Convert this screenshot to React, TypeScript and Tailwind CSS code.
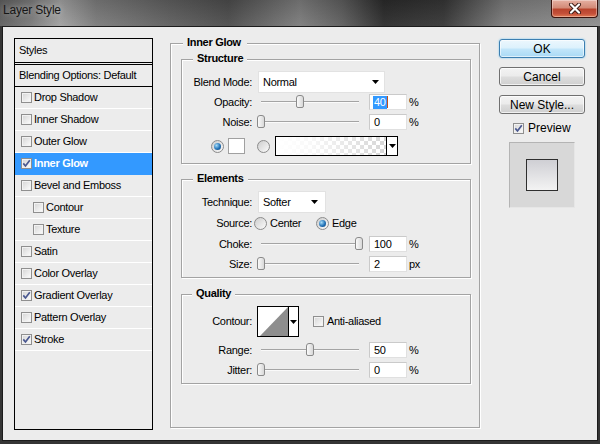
import React from 'react';

// Photoshop "Layer Style" dialog — Inner Glow page

const styles: { label: string; on?: boolean; sub?: boolean; active?: boolean }[] = [
  { label: 'Drop Shadow' },
  { label: 'Inner Shadow' },
  { label: 'Outer Glow' },
  { label: 'Inner Glow', on: true, active: true },
  { label: 'Bevel and Emboss' },
  { label: 'Contour', sub: true },
  { label: 'Texture', sub: true },
  { label: 'Satin' },
  { label: 'Color Overlay' },
  { label: 'Gradient Overlay', on: true },
  { label: 'Pattern Overlay' },
  { label: 'Stroke', on: true },
];

function Check({ on }: { on?: boolean }) {
  return (
    <span className="flex h-[11px] w-[11px] shrink-0 items-center justify-center border border-[#8f8f8f] bg-[linear-gradient(135deg,#d4d4d4,#fdfdfd)] shadow-[inset_0_0_0_1px_#f2f2f2]">
      {on && (
        <svg width="9" height="9" viewBox="0 0 9 9">
          <path d="M1.3 4.4 3.5 7 7.8 1.3" fill="none" stroke="#4a5890" strokeWidth="1.7" />
        </svg>
      )}
    </span>
  );
}

function Radio({ on }: { on?: boolean }) {
  return (
    <span className="flex h-[13px] w-[13px] shrink-0 items-center justify-center rounded-full border border-[#8b8b8b] bg-[linear-gradient(135deg,#cdcdcd,#fbfbfb)]">
      {on && (
        <span className="h-[7px] w-[7px] rounded-full bg-[radial-gradient(circle_at_35%_35%,#a6dcf8,#2273b8_55%,#0d3d6e)]" />
      )}
    </span>
  );
}

function Slider({ value }: { value: number }) {
  return (
    <div className="relative ml-[9px] h-[16px] w-[98px]">
      <div className="absolute left-0 right-0 top-[7px] h-[2px] border-t border-[#a4a4a4] bg-[#fafafa]" />
      <div
        className="absolute top-[1px] h-[13px] w-[8px] rounded-t-[3px] rounded-b-[2px] border border-[#8a8a8a] bg-[linear-gradient(90deg,#fafafa,#d8d8d8)]"
        style={{ left: `calc(${value}% - 4px)` }}
      />
    </div>
  );
}

function Num({ v, sel }: { v: string; sel?: boolean }) {
  return (
    <div className="ml-[10px] flex h-[16px] w-[38px] items-center border border-[#e0e0e0] border-t-[#cacaca] border-l-[#cacaca] bg-white pl-[3px]">
      {sel ? (
        <>
          <span className="bg-[#3399ff] px-px text-white">{v}</span>
          <span className="h-[12px] w-px bg-[#c0501a]" />
        </>
      ) : (
        <span className="pl-px">{v}</span>
      )}
    </div>
  );
}

function Label({ children }: { children: React.ReactNode }) {
  return <span className="w-[70px] shrink-0 text-right">{children}</span>;
}

function Arrow() {
  return (
    <svg width="7" height="4" viewBox="0 0 7 4">
      <path d="M0 0h7L3.5 4z" fill="#000" />
    </svg>
  );
}

function Legend({ children, className }: { children: React.ReactNode; className: string }) {
  return (
    <span className={`absolute top-[-8px] bg-[#ececec] pl-[4px] pr-[4px] font-bold leading-[13px] ${className}`}>
      {children}
    </span>
  );
}

function Box({ children, className }: { children: React.ReactNode; className: string }) {
  return (
    <div className={`relative w-[290px] border border-[#a3a3a3] shadow-[inset_1px_1px_0_#fff,1px_1px_0_#fff] ${className}`}>
      {children}
    </div>
  );
}

export default function App() {
  return (
    <div className="flex h-[444px] w-[600px] flex-col overflow-hidden bg-[#353535] font-['Liberation_Sans',Arial,sans-serif] text-[11px] leading-[13px] tracking-[-0.3px] text-black">
      {/* title bar */}
      <div className="flex h-[26px] items-start justify-between bg-[linear-gradient(180deg,rgba(0,0,0,0.12),rgba(255,255,255,0.06)),linear-gradient(90deg,#5e5e5e_0%,#787878_5%,#a0a0a0_10%,#7a7a7a_16%,#5e5e5e_28%,#4b4b4b_38%,#7b7b7b_50%,#5c5c5c_57%,#2a2a2a_64%,#353535_74%,#7a7a7a_84%,#8e8e8e_100%)]">
        <span className="pl-[3px] pt-[3px] text-[12px] leading-[15px] tracking-[-0.2px] text-[#161616] [text-shadow:0_0_6px_rgba(255,255,255,0.55)]">
          Layer Style
        </span>
        <div className="mr-[2px] flex h-[18px] w-[47px] items-center justify-center rounded-b-[4px] border border-t-0 border-[#3a120c] bg-[linear-gradient(180deg,#e6b0a2_0%,#d38b78_45%,#b9442d_55%,#c4503a_80%,#e27a52_100%)] shadow-[inset_0_0_0_1px_rgba(255,255,255,0.35)]">
          <svg width="14" height="11" viewBox="0 0 14 11">
            <path d="M3 1.5 11 9.5M11 1.5 3 9.5" stroke="#3b1a14" strokeWidth="4" strokeLinecap="round" />
            <path d="M3 1.5 11 9.5M11 1.5 3 9.5" stroke="#fff" strokeWidth="2.2" strokeLinecap="round" />
          </svg>
        </div>
      </div>

      {/* dialog body */}
      <div className="ml-[2px] flex h-[415px] w-[596px] items-start border border-[#1c1c1c] bg-[#ececec] pl-[11px] pt-[11px]">
        {/* styles list */}
        <div className="h-[392px] w-[139px] border border-black">
          <div className="flex h-[26px] items-center border-b-[3px] border-double border-black pl-[4px] pb-[1px]">Styles</div>
          <div className="flex h-[22px] items-center border-b border-black pl-[4px]">Blending Options: Default</div>
          {styles.map((s) => (
            <div
              key={s.label}
              className={`flex h-[22px] items-center gap-[2px] border-b ${s.active ? 'border-[#3399ff] bg-[#3399ff] font-bold text-white' : 'border-white'} ${s.sub ? 'pl-[18px]' : 'pl-[6px]'}`}
            >
              <Check on={s.on} />
              <span>{s.label}</span>
            </div>
          ))}
        </div>

        {/* settings */}
        <div className="relative ml-[17px] mt-[5px] h-[385px] w-[310px] border border-[#a3a3a3] pl-[10px] pt-[15px] shadow-[inset_1px_1px_0_#fff,1px_1px_0_#fff]">
          <Legend className="left-[12px] pr-[6px]">Inner Glow</Legend>

          <Box className="h-[105px]">
            <Legend className="left-[11px] pr-[3px]">Structure</Legend>
            <div className="mt-[11px] flex h-[22px] items-center">
              <Label>Blend Mode:</Label>
              <div className="ml-[6px] flex h-[22px] w-[127px] items-center justify-between border border-[#e2e2e2] bg-white pl-[4px] pr-[5px]">
                <span>Normal</span>
                <Arrow />
              </div>
            </div>
            <div className="mt-[1px] flex h-[16px] items-center">
              <Label>Opacity:</Label>
              <Slider value={40} />
              <Num v="40" sel />
              <span className="ml-[2px]">%</span>
            </div>
            <div className="mt-[4px] flex h-[16px] items-center">
              <Label>Noise:</Label>
              <Slider value={0} />
              <Num v="0" />
              <span className="ml-[2px]">%</span>
            </div>
            <div className="mt-[6px] flex h-[20px] items-center pl-[29px]">
              <Radio on />
              <span className="ml-[4px] h-[16px] w-[17px] border border-[#a0a0a0] bg-white" />
              <span className="ml-[12px]">
                <Radio />
              </span>
              <div className="ml-[5px] flex h-[20px] w-[123px] border border-black">
                <div className="flex-1 bg-[linear-gradient(90deg,#fff_0%,rgba(255,255,255,0.85)_30%,rgba(255,255,255,0)_100%),repeating-conic-gradient(#d6d6d6_0_25%,#ffffff_0_50%)] bg-[length:100%_100%,8px_8px]" />
                <div className="flex w-[11px] items-center justify-center border-l border-black bg-white">
                  <Arrow />
                </div>
              </div>
            </div>
          </Box>

          <Box className="mt-[15px] h-[99px]">
            <Legend className="left-[11px] pr-[3px]">Elements</Legend>
            <div className="mt-[11px] flex h-[22px] items-center">
              <Label>Technique:</Label>
              <div className="ml-[6px] flex h-[22px] w-[68px] items-center justify-between border border-[#e2e2e2] bg-white pl-[4px] pr-[7px]">
                <span>Softer</span>
                <Arrow />
              </div>
            </div>
            <div className="mt-[2px] flex h-[16px] items-center">
              <Label>Source:</Label>
              <div className="ml-[2px] flex w-[62px] items-center">
                <Radio />
                <span className="ml-[3px]">Center</span>
              </div>
              <Radio on />
              <span className="ml-[3px]">Edge</span>
            </div>
            <div className="mt-[5px] flex h-[16px] items-center">
              <Label>Choke:</Label>
              <Slider value={100} />
              <Num v="100" />
              <span className="ml-[2px]">%</span>
            </div>
            <div className="mt-[4px] flex h-[16px] items-center">
              <Label>Size:</Label>
              <Slider value={0} />
              <Num v="2" />
              <span className="ml-[2px]">px</span>
            </div>
          </Box>

          <Box className="mt-[16px] h-[90px]">
            <Legend className="left-[10px] pr-[4px]">Quality</Legend>
            <div className="mt-[11px] flex h-[31px] items-center">
              <Label>Contour:</Label>
              <div className="ml-[5px] flex h-[31px] w-[42px] border border-black bg-white">
                <svg className="h-[29px] w-[30px]" viewBox="0 0 30 29">
                  <path d="M2 29 30 0V29Z" fill="#8e8e8e" />
                </svg>
                <div className="flex flex-1 items-center justify-center border-l border-black">
                  <Arrow />
                </div>
              </div>
              <span className="ml-[14px]">
                <Check />
              </span>
              <span className="ml-[3px]">Anti-aliased</span>
            </div>
            <div className="mt-[5px] flex h-[16px] items-center">
              <Label>Range:</Label>
              <Slider value={50} />
              <Num v="50" />
              <span className="ml-[2px]">%</span>
            </div>
            <div className="mt-[4px] flex h-[16px] items-center">
              <Label>Jitter:</Label>
              <Slider value={0} />
              <Num v="0" />
              <span className="ml-[2px]">%</span>
            </div>
          </Box>
        </div>

        {/* buttons */}
        <div className="ml-[19px] mt-[1px] flex w-[86px] flex-col text-[12px] leading-[14px] tracking-normal">
          <button className="flex h-[19px] items-center justify-center rounded-[3px] border border-[#3c7fb1] bg-[linear-gradient(180deg,#ecf7fd_0%,#dcf1fc_48%,#c2e6fa_52%,#a9daf5_100%)] shadow-[inset_0_0_0_1px_rgba(255,255,255,0.6),0_0_2px_#6cc0f0]">
            OK
          </button>
          <button className="mt-[9px] flex h-[19px] items-center justify-center rounded-[3px] border border-[#707070] bg-[linear-gradient(180deg,#f3f3f3_0%,#ebebeb_48%,#dddddd_52%,#cfcfcf_100%)] shadow-[inset_0_0_0_1px_rgba(255,255,255,0.7)]">
            Cancel
          </button>
          <button className="mt-[9px] flex h-[19px] items-center justify-center rounded-[3px] border border-[#707070] bg-[linear-gradient(180deg,#f3f3f3_0%,#ebebeb_48%,#dddddd_52%,#cfcfcf_100%)] shadow-[inset_0_0_0_1px_rgba(255,255,255,0.7)]">
            New Style...
          </button>
          <div className="mt-[6px] flex h-[16px] items-center gap-[4px] pl-[14px]">
            <Check on />
            <span>Preview</span>
          </div>
          <div className="ml-[10px] mt-[6px] flex h-[66px] w-[66px] items-center justify-center border border-[#b4b4b4] border-b-[#e6e6e6] border-r-[#e6e6e6] bg-[#d8d8d8]">
            <div className="h-[32px] w-[32px] border border-[#2e2e2e] bg-[linear-gradient(180deg,#cfcfd4,#f3f3f3)]" />
          </div>
        </div>
      </div>
    </div>
  );
}
